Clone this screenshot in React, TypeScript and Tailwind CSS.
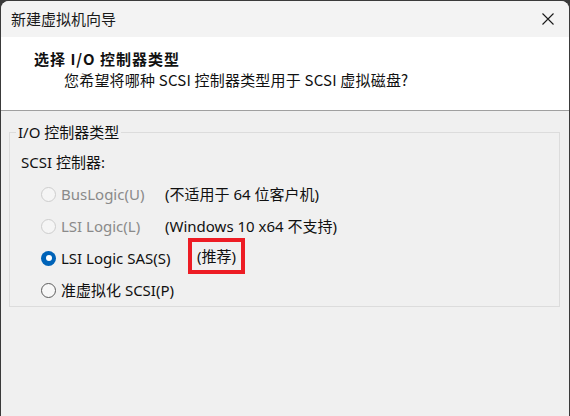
import React from 'react';

type Opt = {
  label: string;
  note?: string;
  state: 'disabled' | 'checked' | 'normal';
  boxed?: boolean;
};

const OPTIONS: Opt[] = [
  { label: 'BusLogic(U)', note: '(不适用于 64 位客户机)', state: 'disabled' },
  { label: 'LSI Logic(L)', note: '(Windows 10 x64 不支持)', state: 'disabled' },
  { label: 'LSI Logic SAS(S)', note: '(推荐)', state: 'checked', boxed: true },
  { label: '准虚拟化 SCSI(P)', state: 'normal' },
];

const Radio = ({ state }: { state: Opt['state'] }) => {
  if (state === 'checked') {
    return (
      <span className="flex h-[15px] w-[15px] shrink-0 items-center justify-center rounded-full bg-[#0063b8]">
        <span className="h-[6px] w-[6px] rounded-full bg-white" />
      </span>
    );
  }
  if (state === 'disabled') {
    return <span className="h-[15px] w-[15px] shrink-0 rounded-full border border-[#cdcdcd] bg-[#f5f5f5]" />;
  }
  return <span className="h-[15px] w-[15px] shrink-0 rounded-full border border-[#5c5c5c] bg-[#f7f7f7]" />;
};

export default function App() {
  return (
    <div className="h-[416px] w-[570px] overflow-hidden bg-[#3a3a3a] px-px pt-px font-['Noto_Sans','Noto_Sans_CJK_SC',sans-serif] text-[15px] leading-5 text-[#111]">
      <div className="flex h-full flex-col overflow-hidden rounded-t-[8px] bg-[#f0f0f0]">
        {/* title bar */}
        <div className="flex h-[36px] shrink-0 items-center justify-between bg-[#f3f3f3] pl-[10px] pr-[15px]">
          <span className="font-['Noto_Sans_CJK_SC',sans-serif] text-[15px] text-[#1a1a1a]">新建虚拟机向导</span>
          <svg width="12" height="12" viewBox="0 0 12 12" fill="none" stroke="#1a1a1a" strokeWidth="1.1">
            <path d="M0.5 0.5 L11.5 11.5 M11.5 0.5 L0.5 11.5" />
          </svg>
        </div>

        {/* header */}
        <div className="h-[74px] shrink-0 border-b border-[#a0a0a0] bg-white pl-[33px] pt-[12px] font-['Noto_Sans_CJK_SC',sans-serif]">
          <div className="font-bold tracking-[1px]">选择 I/O 控制器类型</div>
          <div className="mt-px pl-[30px] tracking-[0.2px]">您希望将哪种 SCSI 控制器类型用于 SCSI 虚拟磁盘?</div>
        </div>

        {/* body */}
        <div className="pl-[8px] pr-[9px] pt-[11px]">
          <fieldset className="border border-[#dcdcdc] pl-[6px]">
            <legend className="px-[2px]">I/O 控制器类型</legend>
            <div className="mt-[10px] pl-[5px]">SCSI 控制器:</div>
            <div className="mt-[6px] flex flex-col">
              {OPTIONS.map((o) => (
                <div key={o.label} className="flex h-[32px] items-center pl-[25px]">
                  <Radio state={o.state} />
                  <span
                    className={`ml-[5px] w-[104px] shrink-0 whitespace-nowrap ${
                      o.state === 'disabled' ? 'text-[#8a8a8a]' : 'text-[#111]'
                    }`}
                  >
                    {o.label}
                  </span>
                  {o.note &&
                    (o.boxed ? (
                      <span className="mb-[5px] ml-[23px] border-4 border-[#ed1c24] px-[5px] py-[4px] leading-5">
                        {o.note}
                      </span>
                    ) : (
                      <span className="whitespace-nowrap">{o.note}</span>
                    ))}
                </div>
              ))}
            </div>
          </fieldset>
        </div>
      </div>
    </div>
  );
}
